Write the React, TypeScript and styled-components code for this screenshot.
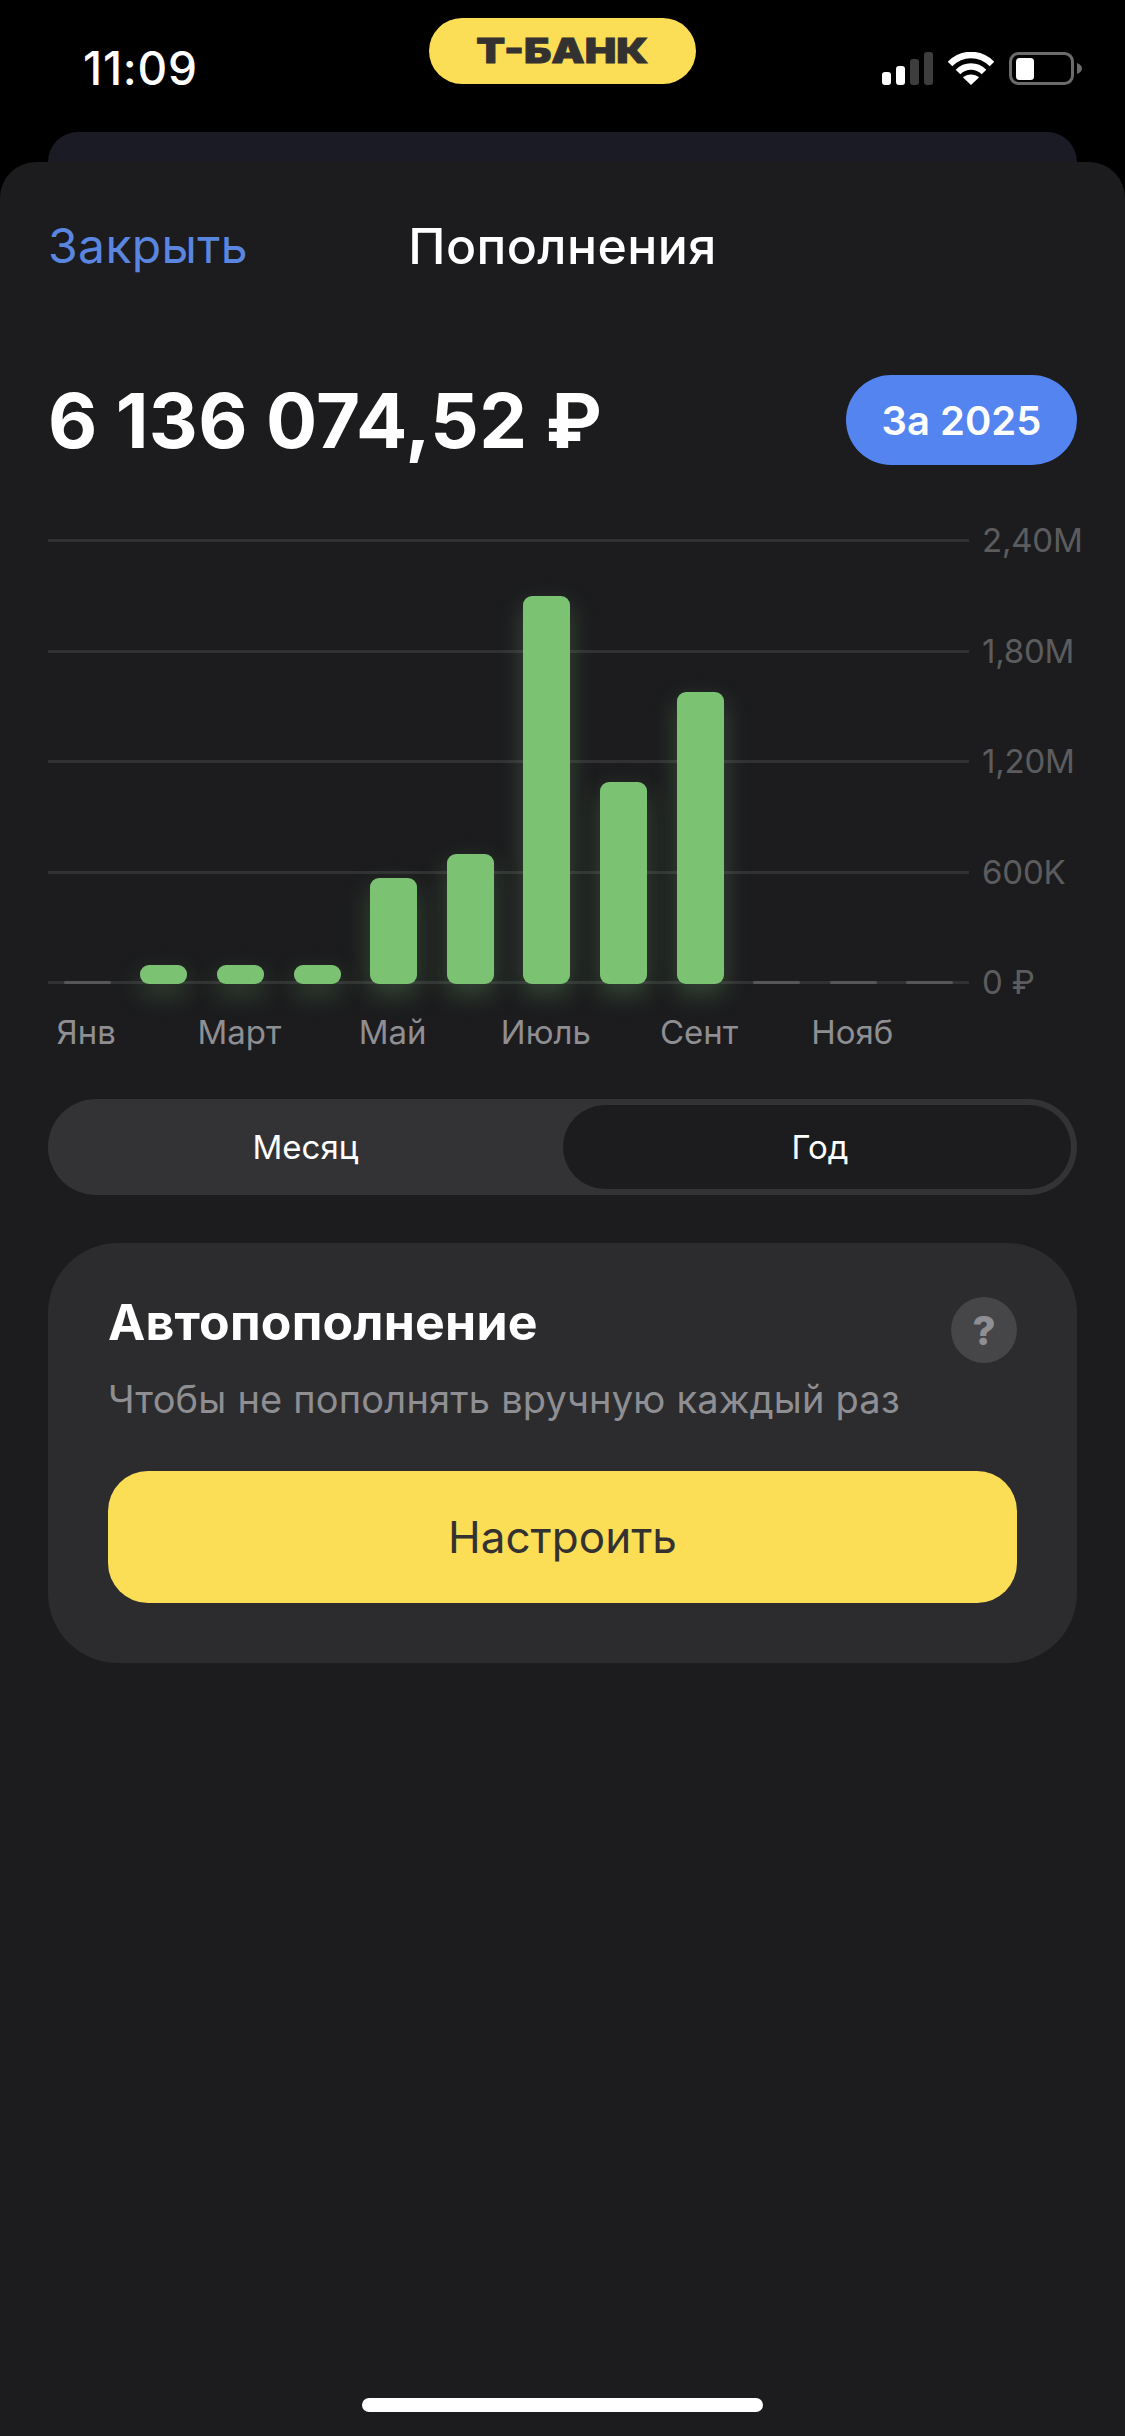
import React from 'react';
import styled, { createGlobalStyle } from 'styled-components';

const axisValues = ['2,40M', '1,80M', '1,20M', '600K', '0 ₽'];

const bars = [0, 19, 19, 19, 106, 130, 388, 202, 292, 0, 0, 0];

const months = ['Янв', 'Март', 'Май', 'Июль', 'Сент', 'Нояб'];

const App: React.FC = () => {
  return (
    <Screen>
      <GlobalStyle />
      <StatusBar>
        <Time>11:09</Time>
        <BankPill>
          <BankName>Т-БАНК</BankName>
        </BankPill>
        <StatusIcons>
          <svg width="51" height="33" viewBox="0 0 51 33">
            <rect x="0" y="20" width="9" height="13" rx="3" fill="#fff" />
            <rect x="14" y="14" width="9" height="19" rx="3" fill="#fff" />
            <rect x="28" y="7" width="9" height="26" rx="3" fill="#3d3d3d" />
            <rect x="42" y="0" width="9" height="33" rx="3" fill="#3d3d3d" />
          </svg>
          <svg width="46" height="33" viewBox="0 0 46 33">
            <path d="M2 12C8 6 15 3 23 3s15 3 21 9" fill="none" stroke="#fff" strokeWidth="6.500" />
            <path d="M10 20C13.500 16.500 18 14.500 23 14.500S32.500 16.500 36 20" fill="none" stroke="#fff" strokeWidth="6.500" />
            <path d="M15 25.500C17 23.700 20 22.500 23 22.500s6 1.200 8 3L23 33z" fill="#fff" />
          </svg>
          <svg width="74" height="33" viewBox="0 0 74 33">
            <rect x="1.500" y="1.500" width="62" height="30" rx="8" fill="none" stroke="#6b6b6b" strokeWidth="3" />
            <rect x="7" y="6" width="18" height="22" rx="3.500" fill="#fff" />
            <path d="M68 11c3 1 5 3 5 5.500s-2 4.500-5 5.500z" fill="#6b6b6b" />
          </svg>
        </StatusIcons>
      </StatusBar>

      <BackCard />

      <Sheet>
        <Nav>
          <CloseLink>Закрыть</CloseLink>
          <NavTitle>Пополнения</NavTitle>
        </Nav>

        <SummaryRow>
          <Amount>6 136 074,52 ₽</Amount>
          <PeriodPill>За 2025</PeriodPill>
        </SummaryRow>

        <Plot>
          {axisValues.map((value) => (
            <AxisRow key={value}>
              <AxisLine />
              <AxisLabel>{value}</AxisLabel>
            </AxisRow>
          ))}
          <BarsLayer>
            {bars.map((height, index) => (
              <Bar key={index} $height={height} />
            ))}
          </BarsLayer>
        </Plot>

        <MonthRow>
          {months.map((month) => (
            <MonthLabel key={month}>{month}</MonthLabel>
          ))}
        </MonthRow>

        <Toggle>
          <ToggleItem>Месяц</ToggleItem>
          <ToggleItem $active>Год</ToggleItem>
        </Toggle>

        <AutoCard>
          <AutoHead>
            <div>
              <AutoTitle>Автопополнение</AutoTitle>
              <AutoText>Чтобы не пополнять вручную каждый раз</AutoText>
            </div>
            <HelpButton>?</HelpButton>
          </AutoHead>
          <SetupButton>Настроить</SetupButton>
        </AutoCard>

        <HomeIndicator />
      </Sheet>
    </Screen>
  );
};

const GlobalStyle = createGlobalStyle`
  html, body {
    margin: 0;
    padding: 0;
    background: #000;
  }

  * {
    box-sizing: border-box;
  }
`;

const Screen = styled.div`
  width: 1125px;
  height: 2436px;
  background: #000;
  color: #fff;
  font-family: Inter, 'Noto Sans', sans-serif;
  display: flex;
  flex-direction: column;
  overflow: hidden;
`;

const StatusBar = styled.div`
  height: 132px;
  flex-shrink: 0;
  display: grid;
  grid-template-columns: 1fr auto 1fr;
  padding: 0 42px;
`;

const Time = styled.div`
  font-size: 46px;
  font-weight: 500;
  line-height: 50px;
  letter-spacing: 0.8px;
  margin: 43px 0 0 41px;
`;

const BankPill = styled.div`
  width: 267px;
  height: 66px;
  margin-top: 18px;
  background: #fcdd56;
  border-radius: 33px;
  display: flex;
  align-items: center;
  justify-content: center;
`;

const BankName = styled.span`
  color: #333231;
  font-size: 34px;
  font-weight: 900;
  line-height: 1;
  transform: scaleX(1.24);
  -webkit-text-stroke: 0.8px #333231;
`;

const StatusIcons = styled.div`
  display: flex;
  justify-content: flex-end;
  gap: 15px;
  margin-top: 52px;
  height: 33px;
`;

const BackCard = styled.div`
  height: 30px;
  flex-shrink: 0;
  margin: 0 48px;
  background: #1a1b25;
  border-radius: 36px 36px 0 0;
`;

const Sheet = styled.div`
  flex: 1;
  display: flex;
  flex-direction: column;
  padding: 54px 48px 0;
  background: #1c1c1e;
  border-radius: 36px 36px 0 0;
`;

const Nav = styled.div`
  display: grid;
  grid-template-columns: 1fr auto 1fr;
  align-items: center;
  height: 60px;
`;

const CloseLink = styled.span`
  color: #5a86e0;
  font-size: 48px;
  line-height: 60px;
  letter-spacing: 0.4px;
`;

const NavTitle = styled.span`
  font-size: 50px;
  font-weight: 500;
  line-height: 60px;
  letter-spacing: 0.4px;
`;

const SummaryRow = styled.div`
  display: flex;
  align-items: center;
  justify-content: space-between;
  margin-top: 99px;
  height: 90px;
`;

const Amount = styled.div`
  font-size: 76px;
  font-weight: 700;
  line-height: 90px;
  letter-spacing: 0.25px;
  white-space: nowrap;
`;

const PeriodPill = styled.div`
  width: 231px;
  height: 90px;
  background: #5384f0;
  border-radius: 45px;
  display: flex;
  align-items: center;
  justify-content: center;
  font-size: 40px;
  font-weight: 600;
`;

const Plot = styled.div`
  position: relative;
  margin-top: 74px;
  height: 445px;
`;

const AxisRow = styled.div`
  height: 110.5px;
  display: flex;
  align-items: flex-start;
  gap: 13px;

  &:last-of-type {
    height: 3px;
  }
`;

const AxisLine = styled.div`
  flex-shrink: 0;
  width: 921px;
  height: 3px;
  background: #313133;
`;

const AxisLabel = styled.span`
  color: #5c5c5f;
  font-size: 33px;
  line-height: 3px;
  letter-spacing: -0.2px;
  white-space: nowrap;
`;

const BarsLayer = styled.div`
  position: absolute;
  left: 1px;
  bottom: 0;
  height: 100%;
  display: grid;
  grid-template-columns: repeat(12, 76.6px);
  justify-items: center;
  align-items: end;
`;

const Bar = styled.div<{ $height: number }>`
  width: 47px;
  height: ${(props) => props.$height || 3}px;
  border-radius: ${(props) => (props.$height ? '9px' : '2px')};
  background: ${(props) => (props.$height ? '#7bc272' : '#565658')};
  box-shadow: ${(props) =>
    props.$height ? '0 10px 26px rgba(123, 194, 114, 0.28)' : 'none'};
`;

const MonthRow = styled.div`
  display: grid;
  grid-template-columns: repeat(6, 153.2px);
  margin-top: 28px;
`;

const MonthLabel = styled.span`
  width: 76.6px;
  display: flex;
  justify-content: center;
  color: #8e8e93;
  font-size: 33px;
  line-height: 40px;
  white-space: nowrap;
`;

const Toggle = styled.div`
  display: flex;
  height: 96px;
  margin-top: 47px;
  padding: 6px;
  background: #333335;
  border-radius: 48px;
`;

const ToggleItem = styled.div<{ $active?: boolean }>`
  flex: ${(props) => (props.$active ? '0 0 508px' : '1')};
  display: flex;
  align-items: center;
  justify-content: center;
  padding: ${(props) => (props.$active ? '0 0 0 6px' : '0 6px 0 0')};
  font-size: 33px;
  border-radius: 42px;
  background: ${(props) => (props.$active ? '#1c1c1e' : 'transparent')};
`;

const AutoCard = styled.div`
  margin-top: 48px;
  padding: 51px 60px 60px;
  background: #2c2c2e;
  border-radius: 70px;
`;

const AutoHead = styled.div`
  display: flex;
  align-items: flex-start;
  justify-content: space-between;
`;

const AutoTitle = styled.div`
  font-size: 50px;
  font-weight: 700;
  line-height: 56px;
  letter-spacing: 0.2px;
`;

const AutoText = styled.div`
  margin-top: 25px;
  color: #8e8e93;
  font-size: 38px;
  line-height: 48px;
  letter-spacing: 0.2px;
  white-space: nowrap;
`;

const HelpButton = styled.div`
  width: 66px;
  height: 66px;
  margin-top: 3px;
  border-radius: 50%;
  background: #464648;
  color: #8e8e93;
  display: flex;
  align-items: center;
  justify-content: center;
  font-size: 40px;
  font-weight: 800;
`;

const SetupButton = styled.div`
  height: 132px;
  margin-top: 48px;
  background: #fcdd56;
  border-radius: 40px;
  color: #333231;
  display: flex;
  align-items: center;
  justify-content: center;
  font-size: 44px;
`;

const HomeIndicator = styled.div`
  width: 401px;
  height: 14px;
  margin-top: auto;
  margin-bottom: 24px;
  align-self: center;
  background: #fff;
  border-radius: 7px;
`;

export default App;
